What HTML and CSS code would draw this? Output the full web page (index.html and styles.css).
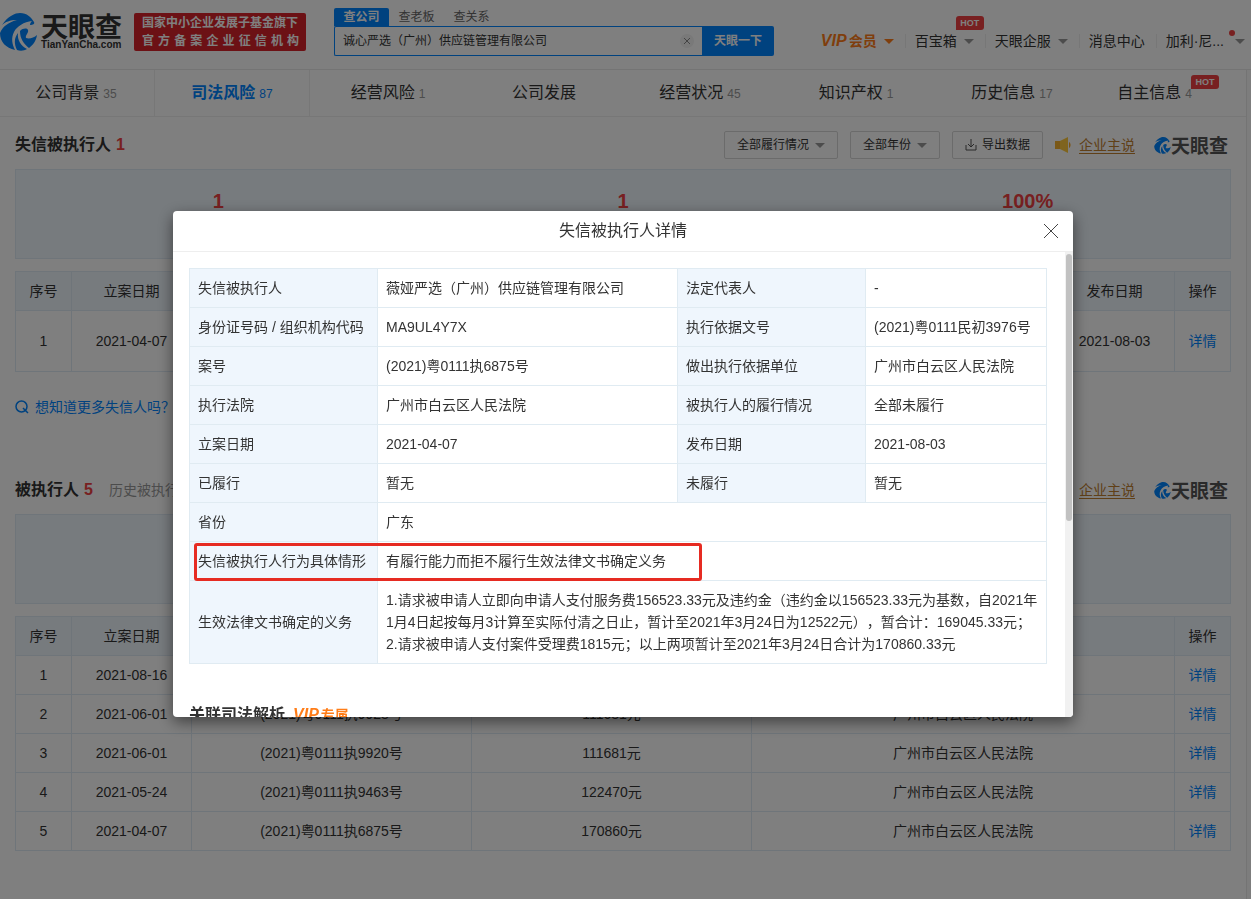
FILE: index.html
```html
<!DOCTYPE html>
<html lang="zh-CN">
<head>
<meta charset="utf-8">
<title>天眼查 - 司法风险</title>
<link rel="stylesheet" href="styles.css">
</head>
<body>
<svg class="defs" aria-hidden="true">
  <symbol id="swirl" viewBox="0 0 37 38">
    <path fill="#0084ff" d="M2 12C8 3 15 0 20 0C27 0 31 4 34 9C35 11 33 12 30 12C30 10 31 9 32 8C24 9 17 13 14 19C11 25 12 31 15 37C6 35 0 29 0 20C3 13 9 9 17 7C10 7 5 9 2 12Z"/>
    <path fill="#0084ff" d="M20 18C23 15 27 15 28 17C29 20 25 22 26 25C29 26 34 25 37 22C36 28 33 32 29 35C24 31 20 26 20 18Z"/>
    <path fill="#0084ff" d="M18 20C17 27 21 33 27 36C24 38 20 38 17 37C14 31 14 25 18 20Z"/>
  </symbol>
  <symbol id="horn" viewBox="0 0 16 18">
    <path fill="#f5b12e" d="M0 5H5V13H0Z"/><path fill="#ffc93c" d="M5 5L13 1V17L5 13Z"/><path fill="#f5a623" d="M14 6C16 7 16 11 14 12Z"/>
  </symbol>
</svg>
<header class="top">
  <a class="logo" href="#">
    <svg class="logo-mark"><use href="#swirl"/></svg>
    <span class="logo-words"><b class="logo-cn">天眼查</b><b class="logo-en">TianYanCha.com</b></span>
  </a>
  <div class="slogan"><span>国家中小企业发展子基金旗下</span><span class="wide"><i>官</i><i>方</i><i>备</i><i>案</i><i>企</i><i>业</i><i>征</i><i>信</i><i>机</i><i>构</i></span></div>
  <form class="search">
    <div class="search-tabs"><button type="button" class="on">查公司</button><button type="button">查老板</button><button type="button">查关系</button></div>
    <div class="search-row">
      <div class="field"><input type="text" aria-label="搜索公司" value="诚心严选（广州）供应链管理有限公司"><button type="button" class="clear" aria-label="清除"><svg viewBox="0 0 8 8"><path d="M1 1L7 7M7 1L1 7"/></svg></button></div>
      <button type="button" class="go">天眼一下</button>
    </div>
  </form>
  <nav class="user">
    <a class="vip" href="#"><em>VIP</em>会员<s class="tri"></s></a>
    <a href="#">百宝箱<s class="tri"></s><span class="hot">HOT</span></a>
    <a href="#">天眼企服<s class="tri"></s></a>
    <a href="#">消息中心</a>
    <a class="me" href="#">加利·尼...<s class="tri"></s><span class="dot"></span></a>
  </nav>
</header>
<div class="page">
<nav class="tabs">
  <a href="#">公司背景<small>35</small></a>
  <a href="#" class="on">司法风险<small>87</small></a>
  <a href="#">经营风险<small>1</small></a>
  <a href="#">公司发展</a>
  <a href="#">经营状况<small>45</small></a>
  <a href="#">知识产权<small>1</small></a>
  <a href="#">历史信息<small>17</small></a>
  <a href="#" class="last">自主信息<small>4</small><span class="hot">HOT</span></a>
</nav>
<main>
<section class="block">
  <div class="head">
    <h2>失信被执行人<b>1</b></h2>
    <div class="tools">
      <button type="button">全部履行情况<s class="tri"></s></button>
      <button type="button">全部年份<s class="tri"></s></button>
      <button type="button"><svg class="down" viewBox="0 0 12 12"><path d="M6 0V7M3 5L6 8L9 5M1 6V11H11V6"/></svg>导出数据</button>
      <a class="say" href="#"><svg><use href="#horn"/></svg><span>企业主说</span></a>
      <span class="brand"><svg><use href="#swirl"/></svg>天眼查</span>
    </div>
  </div>
  <div class="stats"><b>1</b><b>1</b><b>100%</b></div>
  <table class="list tall">
    <colgroup><col class="c-no"><col class="c-date"><col><col class="c-date"><col class="c-op"></colgroup>
    <thead><tr><th>序号</th><th>立案日期</th><th></th><th>发布日期</th><th>操作</th></tr></thead>
    <tbody><tr><td>1</td><td>2021-04-07</td><td></td><td>2021-08-03</td><td><a href="#">详情</a></td></tr></tbody>
  </table>
  <a class="more" href="#"><svg viewBox="0 0 14 14"><circle cx="6.500" cy="6.500" r="5.500"/><path d="M8 8L13 13"/></svg>想知道更多失信人吗？</a>
</section>
<section class="block">
  <div class="head">
    <h2>被执行人<b>5</b></h2><a class="past" href="#">历史被执行人</a>
    <div class="tools">
      <a class="say" href="#"><svg><use href="#horn"/></svg><span>企业主说</span></a>
      <span class="brand"><svg><use href="#swirl"/></svg>天眼查</span>
    </div>
  </div>
  <div class="stats"></div>
  <table class="list">
    <colgroup><col class="c-no"><col class="c-date"><col class="c-case"><col class="c-case"><col><col class="c-op"></colgroup>
    <thead><tr><th>序号</th><th>立案日期</th><th></th><th></th><th></th><th>操作</th></tr></thead>
    <tbody>
      <tr><td>1</td><td>2021-08-16</td><td></td><td></td><td></td><td><a href="#">详情</a></td></tr>
      <tr><td>2</td><td>2021-06-01</td><td>(2021)粤0111执9928号</td><td>111681元</td><td>广州市白云区人民法院</td><td><a href="#">详情</a></td></tr>
      <tr><td>3</td><td>2021-06-01</td><td>(2021)粤0111执9920号</td><td>111681元</td><td>广州市白云区人民法院</td><td><a href="#">详情</a></td></tr>
      <tr><td>4</td><td>2021-05-24</td><td>(2021)粤0111执9463号</td><td>122470元</td><td>广州市白云区人民法院</td><td><a href="#">详情</a></td></tr>
      <tr><td>5</td><td>2021-04-07</td><td>(2021)粤0111执6875号</td><td>170860元</td><td>广州市白云区人民法院</td><td><a href="#">详情</a></td></tr>
    </tbody>
  </table>
</section>
</main>
</div>
<div class="mask">
  <div class="modal" role="dialog" aria-labelledby="dlg-title">
    <div class="modal-head"><h3 id="dlg-title">失信被执行人详情</h3><button type="button" class="close" aria-label="关闭"><svg viewBox="0 0 14 14"><path d="M0 0L14 14M14 0L0 14"/></svg></button></div>
    <div class="modal-main">
      <div class="modal-body">
        <div class="detail-wrap">
        <table class="detail">
          <colgroup><col class="d-label"><col class="d-value"><col class="d-label"><col></colgroup>
          <tbody>
          <tr><th>失信被执行人</th><td>薇娅严选（广州）供应链管理有限公司</td><th>法定代表人</th><td>-</td></tr>
          <tr><th>身份证号码 / 组织机构代码</th><td>MA9UL4Y7X</td><th>执行依据文号</th><td>(2021)粤0111民初3976号</td></tr>
          <tr><th>案号</th><td>(2021)粤0111执6875号</td><th>做出执行依据单位</th><td>广州市白云区人民法院</td></tr>
          <tr><th>执行法院</th><td>广州市白云区人民法院</td><th>被执行人的履行情况</th><td>全部未履行</td></tr>
          <tr><th>立案日期</th><td>2021-04-07</td><th>发布日期</th><td>2021-08-03</td></tr>
          <tr><th>已履行</th><td>暂无</td><th>未履行</th><td>暂无</td></tr>
          <tr><th>省份</th><td colspan="3">广东</td></tr>
          <tr><th>失信被执行人行为具体情形</th><td colspan="3">有履行能力而拒不履行生效法律文书确定义务</td></tr>
          <tr><th>生效法律文书确定的义务</th><td colspan="3">1.请求被申请人立即向申请人支付服务费156523.33元及违约金（违约金以156523.33元为基数，自2021年1月4日起按每月3计算至实际付清之日止，暂计至2021年3月24日为12522元），暂合计：169045.33元；<br>2.请求被申请人支付案件受理费1815元；以上两项暂计至2021年3月24日合计为170860.33元</td></tr>
          </tbody>
        </table>
        <span class="marker"></span>
        </div>
        <h4>关联司法解析<span class="vip"><em>VIP</em>专属</span></h4>
      </div>
      <div class="track"><span class="thumb"></span></div>
    </div>
  </div>
</div>
</body>
</html>
```
FILE: styles.css
```css
* { box-sizing: border-box; }
body {
  display: flex;
  flex-direction: column;
  margin: 0;
  min-height: 100vh;
  background: #fafafa;
  color: #333;
  font: 14px/22px "Liberation Sans", "Noto Sans CJK SC", sans-serif;
  text-spacing-trim: space-all;
}
a { color: inherit; text-decoration: none; }
button, input { font: inherit; color: inherit; margin: 0; padding: 0; border: 0; background: none; }
h2, h3, h4 { margin: 0; font-weight: 400; }
i { font-style: normal; }
s { text-decoration: none; }
.defs { position: absolute; width: 0; height: 0; }
.tri { display: inline-block; border: 5px solid transparent; border-top-color: #999; border-bottom: 0; margin-left: 7px; vertical-align: 2px; }

.top { display: flex; align-items: flex-start; flex: none; height: 70px; background: #fff; border-bottom: 1px solid #e8e8e8; }
.logo { display: flex; margin-top: 13px; width: 134px; flex: none; }
.logo-mark { width: 37px; height: 38px; flex: none; }
.logo-words { display: flex; flex-direction: column; margin-left: 4px; }
.logo-cn { font: 700 27px/26px "Noto Sans CJK SC", sans-serif; }
.logo-en { font: 700 10px/12px "Liberation Sans", sans-serif; }
.slogan { display: flex; flex-direction: column; flex: none; width: 172px; height: 38px; margin-top: 13px; padding: 1px 7px 1px 8px; border-radius: 2px; background: #d9232b; color: #fff; font-size: 12px; line-height: 18px; font-weight: 700; white-space: nowrap; }
.slogan .wide { display: flex; justify-content: space-between; }
.search { flex: none; width: 440px; margin: 8px 0 0 28px; }
.search-tabs { display: flex; }
.search-tabs button { width: 55px; height: 18px; font-size: 12px; line-height: 18px; color: #666; }
.search-tabs .on { background: #0084ff; color: #fff; font-weight: 700; border-radius: 2px 2px 0 0; }
.search-row { display: flex; height: 30px; }
.field { display: flex; align-items: center; flex: 1; border: 1px solid #0084ff; border-right: 0; border-radius: 2px 0 0 2px; padding: 0 8px; }
.field input { flex: 1; min-width: 0; font-size: 12px; outline: 0; }
.clear { display: grid; place-items: center; width: 14px; height: 14px; border-radius: 50%; background: #f2f2f2; }
.clear svg { width: 8px; height: 8px; stroke: #888; fill: none; }
.go { width: 72px; background: #0084ff; color: #fff; font-size: 12px; font-weight: 700; border-radius: 0 2px 2px 0; }
.user { display: flex; flex: 1; justify-content: flex-end; margin-top: 30px; white-space: nowrap; }
.user a { position: relative; padding: 0 11px 0 10px; }
.user a + a::before { content: ""; position: absolute; left: 0; top: 4px; height: 14px; border-left: 1px solid #eee; }
.user .me { padding-right: 6px; }
.user .me .tri { margin-left: 11px; }
.user .vip .tri { border-top-color: #ff7d18; }
.vip { color: #ff7d18; font-weight: 700; }
.vip em { margin-right: 2px; font: italic 700 16px/22px "Liberation Sans", sans-serif; }
.hot { position: absolute; right: 1px; top: -14px; width: 28px; height: 14px; border-radius: 3px 3px 3px 0; background: #f04142; color: #fff; font-size: 9px; line-height: 14px; font-weight: 700; text-align: center; }
.dot { position: absolute; right: 16px; top: 0; width: 6px; height: 6px; border-radius: 50%; background: #f04142; }

.page { flex: 1; margin-right: 4px; background: #fff; border-right: 1px solid #e8e8e8; }
.tabs { display: grid; grid-template-columns: repeat(8, 1fr); height: 47px; margin-left: -2px; border-bottom: 1px solid #eee; font-size: 16px; line-height: 46px; text-align: center; }
.tabs a { position: relative; }
.tabs small { margin-left: 4px; font-size: 12px; color: #999; }
.tabs .on { color: #0084ff; font-weight: 700; border: solid #eee; border-width: 0 1px; }
.tabs .on small { color: #0084ff; font-weight: 400; }
.tabs .last { padding-right: 27px; }
.tabs .hot { right: 27px; top: 5px; }

main { padding: 0 15px; }
.block { min-height: 345px; }
.head { display: flex; align-items: center; height: 52px; padding: 4px 3px 0 0; }
h2 { font-size: 16px; font-weight: 700; }
h2 b { margin-left: 5px; color: #f04142; }
.past { margin-left: 16px; color: #999; }
.tools { display: flex; align-items: center; gap: 12px; margin-left: auto; font-size: 12px; }
.tools button { display: flex; align-items: center; height: 28px; padding: 0 12px; border: 1px solid #d6d6d6; border-radius: 2px; }
.tools .tri { margin-left: 6px; }
.down { width: 12px; height: 12px; margin-right: 5px; fill: none; stroke: #555; }
.say { display: flex; align-items: center; font-size: 14px; color: #c08030; }
.say svg { width: 16px; height: 18px; margin-right: 8px; }
.say span { border-bottom: 1px solid #c08030; line-height: 16px; }
.brand { display: flex; align-items: center; margin-left: 7px; font: 700 19px/22px "Noto Sans CJK SC", sans-serif; color: #555; }
.brand svg { width: 17px; height: 17px; }
.stats { display: grid; grid-template-columns: repeat(3, 1fr); height: 90px; padding-top: 20px; border: 1px solid #dfeaf5; background: #eff6fd; text-align: center; color: #f04142; font-size: 20px; }
table { border-collapse: collapse; table-layout: fixed; width: 100%; }
.list { margin-top: 12px; text-align: center; }
.list th, .list td { border: 1px solid #dfeaf5; height: 39px; padding: 8px 4px; }
.list th { background: #eff6fd; font-weight: 400; }
.tall td { height: 61px; }
.list a { color: #0084ff; }
.c-no, .c-op { width: 56px; }
.c-date { width: 120px; }
.c-case { width: 280px; }
.more { display: flex; align-items: center; gap: 6px; margin-top: 24px; color: #0084ff; }
.more svg { width: 14px; height: 14px; fill: none; stroke: #0084ff; stroke-width: 1.5; }

.mask { position: fixed; inset: 0; display: flex; justify-content: center; align-items: flex-start; padding: 211px 5px 0 0; background: rgba(0, 0, 0, .5); }
.modal { display: flex; flex-direction: column; width: 900px; max-width: 100%; height: 506px; background: #fff; border-radius: 4px; box-shadow: 0 5px 15px rgba(0, 0, 0, .5); overflow: hidden; }
.modal-head { display: flex; align-items: center; height: 41px; flex: none; padding: 0 15px 0 29px; border-bottom: 1px solid #eee; }
h3 { flex: 1; font-size: 16px; text-align: center; }
.close { display: grid; place-items: center; width: 14px; height: 14px; }
.close svg { width: 14px; height: 14px; stroke: #444; fill: none; overflow: visible; }
.modal-main { display: flex; flex: 1; min-height: 0; }
.modal-body { flex: 1; padding: 16px 18px 0 16px; overflow: hidden; }
.detail-wrap { position: relative; }
.detail th, .detail td { border: 1px solid #e0ebf2; padding: 8px; text-align: left; }
.detail th { background: #eff6fd; font-weight: 400; }
.d-label { width: 188px; }
.d-value { width: 300px; }
.marker { position: absolute; left: 5px; top: 275px; width: 508px; height: 38px; border: 3px solid #e62b22; border-radius: 3px; }
h4 { margin-top: 40px; font-size: 16px; font-weight: 700; }
h4 .vip { margin-left: 8px; font-size: 14px; }
.track { width: 8px; background: #f1f1f1; padding: 2px 1px; }
.thumb { display: block; height: 267px; border-radius: 3px; background: #c1c1c1; }
```
